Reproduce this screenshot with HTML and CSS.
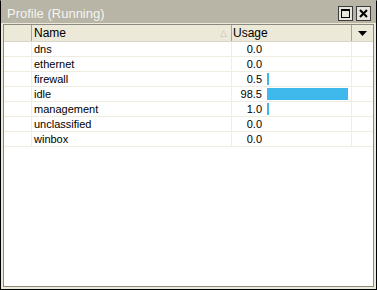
FILE: index.html
```html
<!DOCTYPE html>
<html>
<head>
  <meta charset="UTF-8">
  <title>Profile (Running)</title>
  <link rel="stylesheet" href="styles.css">
</head>
<body>
  <div class="window">
    <div class="titlebar">
      <span class="title">Profile (Running)</span>
      <div class="tbtns">
        <span class="tbtn"><span class="maxicon"></span></span>
        <span class="tbtn">
          <svg width="9" height="9" viewBox="0 0 9 9"><path d="M1 1L8 8M8 1L1 8" stroke="#000" stroke-width="2"/></svg>
        </span>
      </div>
    </div>
    <div class="list">
      <div class="row head">
        <div class="c0"></div>
        <div class="c1">Name <span class="sort">&#9651;</span></div>
        <div class="c2">Usage</div>
        <div class="c3"><svg width="9" height="5" viewBox="0 0 9 5"><path d="M0 0H9L4.5 5Z" fill="#000"/></svg></div>
      </div>
      <div class="row"><div class="c0"></div><div class="c1">dns</div><div class="c2"><span class="val">0.0</span></div><div class="c3"></div></div>
      <div class="row"><div class="c0"></div><div class="c1">ethernet</div><div class="c2"><span class="val">0.0</span></div><div class="c3"></div></div>
      <div class="row"><div class="c0"></div><div class="c1">firewall</div><div class="c2"><span class="val">0.5</span><span class="bar" style="width:2px"></span></div><div class="c3"></div></div>
      <div class="row"><div class="c0"></div><div class="c1">idle</div><div class="c2"><span class="val">98.5</span><span class="bar" style="width:81px"></span></div><div class="c3"></div></div>
      <div class="row"><div class="c0"></div><div class="c1">management</div><div class="c2"><span class="val">1.0</span><span class="bar" style="width:2px"></span></div><div class="c3"></div></div>
      <div class="row"><div class="c0"></div><div class="c1">unclassified</div><div class="c2"><span class="val">0.0</span></div><div class="c3"></div></div>
      <div class="row"><div class="c0"></div><div class="c1">winbox</div><div class="c2"><span class="val">0.0</span></div><div class="c3"></div></div>
    </div>
  </div>
</body>
</html>
```

FILE: styles.css
```css
body {
  margin: 0;
  font-family: "Liberation Sans", Arial, sans-serif;
}

.window {
  width: 377px;
  height: 290px;
  box-sizing: border-box;
  border: 1px solid #000;
  border-top-color: #b8b4a6;
  background: #ece9d8;
  padding: 0 2px 2px 2px;
  display: flex;
  flex-direction: column;
}

.titlebar {
  height: 22px;
  margin: 0 -2px;
  background: #b8b4a6;
  display: flex;
  align-items: center;
  padding: 0 5px 0 6px;
}

.title {
  flex: 1;
  color: #f4f4f0;
  font-size: 13px;
  padding-top: 2px;
}

.tbtns {
  display: flex;
  gap: 3px;
  padding-top: 3px;
}

.tbtn {
  width: 13px;
  height: 13px;
  border: 1px solid #3c3c3c;
  background: #e8e6dc;
  display: flex;
  align-items: center;
  justify-content: center;
}

.maxicon {
  width: 7px;
  height: 6px;
  border: 1px solid #000;
  border-top-width: 2px;
}

.list {
  flex: 1;
  margin-top: 1px;
  border: 1px solid #8c8a80;
  background: #fff;
  font-size: 11px;
  color: #000;
}

.row {
  display: flex;
  height: 14px;
  line-height: 14px;
  border-bottom: 1px solid #efeddf;
}

.row > div {
  box-sizing: border-box;
  border-right: 1px solid #efeddf;
  white-space: nowrap;
}

.c0 { width: 28px; }
.c1 { width: 200px; padding-left: 2px; }
.c2 { width: 120px; display: flex; align-items: center; }
.c3 { flex: 1; border-right: none !important; }

.head {
  height: 16px;
  line-height: 16px;
  background: #ece9d8;
  border-bottom: 1px solid #d8d5c6;
  font-size: 12px;
}

.head > div {
  border-right: 1px solid #a8a698;
}

.head .c1 {
  display: flex;
  justify-content: space-between;
  padding-right: 4px;
}

.head .c2 { padding-left: 1px; }

.head .c3 {
  display: flex;
  align-items: center;
  justify-content: center;
}

.sort {
  color: #c4c2b8;
  font-size: 9px;
}

.val {
  width: 30px;
  text-align: right;
  margin-right: 5px;
}

.bar {
  height: 12px;
  background: #3fb8ec;
}
```
